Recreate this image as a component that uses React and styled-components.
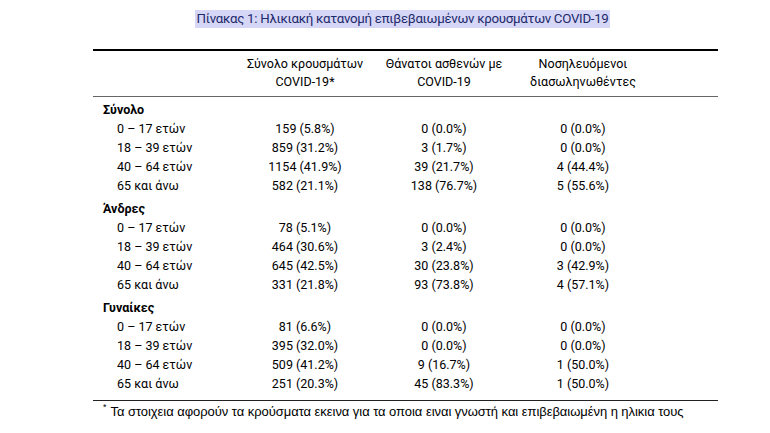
import React from "react";
import styled, { createGlobalStyle } from "styled-components";

const Global = createGlobalStyle`
  html, body { margin: 0; padding: 0; background: #fff; }
  body { font-family: Roboto, "Noto Sans", "DejaVu Sans", sans-serif; color: #000; }
`;

const Page = styled.div`
  width: 770px;
  height: 433px;
  padding: 10px 0 0 93px;
  box-sizing: border-box;
`;

const Content = styled.div`
  width: 625px;
  display: flex;
  flex-direction: column;
`;

const TitleWrap = styled.div`
  display: flex;
  justify-content: center;
  margin-bottom: 21px;
  padding-right: 6px;
`;

const Title = styled.span`
  background: #d6d6f7;
  color: #1c2a6b;
  font-size: 13.3px;
  letter-spacing: -0.3px;
  line-height: 18px;
  padding: 0 1px;
`;

const Table = styled.div`
  display: grid;
  grid-template-columns: 142px 140px 138px 140px 65px;
  border-top: 2px solid #000;
  border-bottom: 1.5px solid #222;
  padding-bottom: 7px;
`;

const Head = styled.div`
  grid-column: ${(p) => p.col};
  text-align: center;
  font-size: 12.5px;
  line-height: 18px;
  padding: 4px 0 5px;
  border-bottom: 1.5px solid #666;
`;

const Section = styled.div`
  grid-column: 1 / -1;
  font-weight: 700;
  font-size: 12.5px;
  line-height: 19px;
  padding: ${(p) => (p.first ? "3px" : "4px")} 0 0 10px;
`;

const Label = styled.div`
  font-size: 12.5px;
  line-height: 19px;
  padding-left: 24px;
`;

const Cell = styled.div`
  font-size: 12.5px;
  line-height: 19px;
  text-align: center;
`;

const Spacer = styled.div``;

const Footnote = styled.div`
  font-family: "Liberation Sans", Arial, sans-serif;
  font-size: 13px;
  letter-spacing: -0.05px;
  white-space: nowrap;
  line-height: 18px;
  padding: 2px 0 0 10px;
`;

const Star = styled.sup`
  font-size: 9px;
  margin-right: 4px;
  vertical-align: 6px;
  line-height: 0;
`;

const ages = ["0 – 17 ετών", "18 – 39 ετών", "40 – 64 ετών", "65 και άνω"];

const sections = [
  {
    name: "Σύνολο",
    rows: [
      ["159 (5.8%)", "0 (0.0%)", "0 (0.0%)"],
      ["859 (31.2%)", "3 (1.7%)", "0 (0.0%)"],
      ["1154 (41.9%)", "39 (21.7%)", "4 (44.4%)"],
      ["582 (21.1%)", "138 (76.7%)", "5 (55.6%)"],
    ],
  },
  {
    name: "Άνδρες",
    rows: [
      ["78 (5.1%)", "0 (0.0%)", "0 (0.0%)"],
      ["464 (30.6%)", "3 (2.4%)", "0 (0.0%)"],
      ["645 (42.5%)", "30 (23.8%)", "3 (42.9%)"],
      ["331 (21.8%)", "93 (73.8%)", "4 (57.1%)"],
    ],
  },
  {
    name: "Γυναίκες",
    rows: [
      ["81 (6.6%)", "0 (0.0%)", "0 (0.0%)"],
      ["395 (32.0%)", "0 (0.0%)", "0 (0.0%)"],
      ["509 (41.2%)", "9 (16.7%)", "1 (50.0%)"],
      ["251 (20.3%)", "45 (83.3%)", "1 (50.0%)"],
    ],
  },
];

export default function App() {
  return (
    <>
      <Global />
      <Page>
        <Content>
          <TitleWrap>
            <Title>Πίνακας 1: Ηλικιακή κατανομή επιβεβαιωμένων κρουσμάτων COVID-19</Title>
          </TitleWrap>
          <Table>
            <Head col={1}>&nbsp;</Head>
            <Head col={2}>
              Σύνολο κρουσμάτων
              <br />
              COVID-19*
            </Head>
            <Head col={3}>
              Θάνατοι ασθενών με
              <br />
              COVID-19
            </Head>
            <Head col={4}>
              Νοσηλευόμενοι
              <br />
              διασωληνωθέντες
            </Head>
            <Head col={5}>&nbsp;</Head>
            {sections.map((s, si) => (
              <React.Fragment key={s.name}>
                <Section first={si === 0}>{s.name}</Section>
                {s.rows.map((r, ri) => (
                  <React.Fragment key={ri}>
                    <Label>{ages[ri]}</Label>
                    <Cell>{r[0]}</Cell>
                    <Cell>{r[1]}</Cell>
                    <Cell>{r[2]}</Cell>
                    <Spacer />
                  </React.Fragment>
                ))}
              </React.Fragment>
            ))}
          </Table>
          <Footnote>
            <Star>*</Star>Τα στοιχεια αφορούν τα κρούσματα εκεινα για τα οποια ειναι γνωστή και επιβεβαιωμένη η ηλικια τους
          </Footnote>
        </Content>
      </Page>
    </>
  );
}
